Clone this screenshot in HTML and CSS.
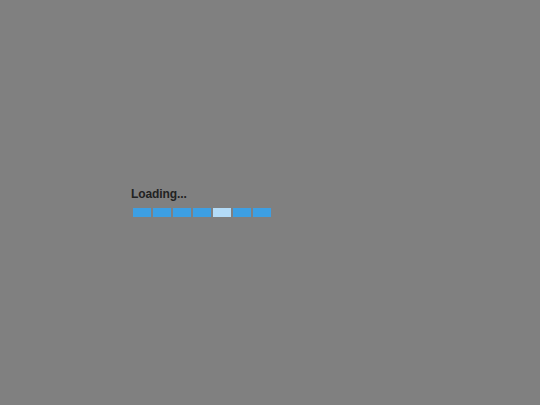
FILE: index.html
```html
<!DOCTYPE html>
<html>
<head>
<meta charset="utf-8">
<link rel="stylesheet" href="styles.css">
</head>
<body>
<div class="loader">
  <div class="label">Loading...</div>
  <div class="bar">
    <span class="seg"></span>
    <span class="seg"></span>
    <span class="seg"></span>
    <span class="seg"></span>
    <span class="seg active"></span>
    <span class="seg"></span>
    <span class="seg"></span>
  </div>
</div>
</body>
</html>
```
FILE: styles.css
```css
html, body {
  margin: 0;
  padding: 0;
  background: #808080;
  width: 540px;
  height: 405px;
  overflow: hidden;
}
.loader {
  padding: 187px 0 0 131px;
}
.label {
  font-family: "Liberation Sans", Arial, sans-serif;
  font-weight: bold;
  font-size: 12px;
  line-height: 14px;
  letter-spacing: -0.1px;
  color: #222222;
}
.bar {
  display: flex;
  gap: 2px;
  margin-top: 7px;
  margin-left: 2px;
}
.seg {
  width: 18px;
  height: 9px;
  background: #3d9fe3;
}
.seg.active {
  background: #b4dcf8;
}
```
